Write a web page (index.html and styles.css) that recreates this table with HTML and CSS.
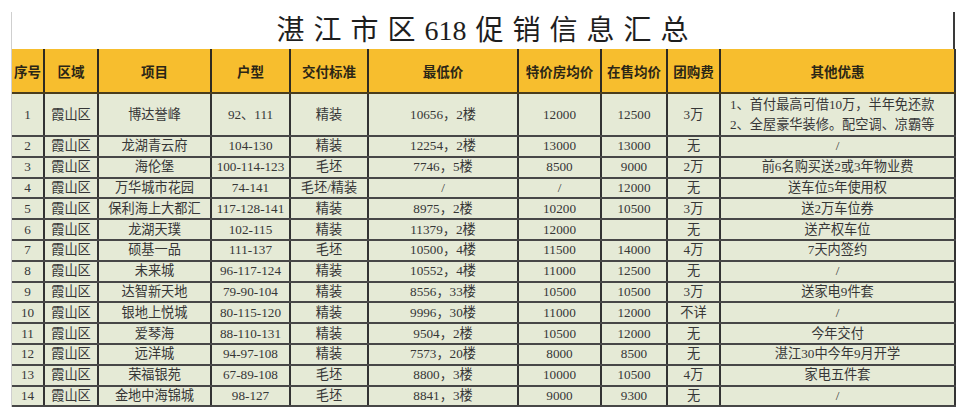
FILE: index.html
```html
<!DOCTYPE html>
<html lang="zh">
<head>
<meta charset="utf-8">
<title>湛江市区618促销信息汇总</title>
<link rel="stylesheet" href="styles.css">
</head>
<body>
<div class="sheet">
  <h1 class="title">湛 江 市 区 618 促 销 信 息 汇 总</h1>
  <table class="grid">
    <colgroup>
      <col class="c-no"><col class="c-area"><col class="c-proj"><col class="c-type"><col class="c-std">
      <col class="c-low"><col class="c-spec"><col class="c-sale"><col class="c-fee"><col class="c-other">
    </colgroup>
    <thead>
      <tr><th>序号</th><th>区域</th><th>项目</th><th>户型</th><th>交付标准</th><th>最低价</th><th>特价房均价</th><th>在售均价</th><th>团购费</th><th>其他优惠</th></tr>
    </thead>
    <tbody>
      <tr class="tall"><td>1</td><td>霞山区</td><td>博达誉峰</td><td>92、111</td><td>精装</td><td>10656，2楼</td><td>12000</td><td>12500</td><td>3万</td><td class="left">1、首付最高可借10万，半年免还款<br>2、全屋豪华装修。配空调、凉霸等</td></tr>
      <tr><td>2</td><td>霞山区</td><td>龙湖青云府</td><td>104-130</td><td>精装</td><td>12254，2楼</td><td>13000</td><td>13000</td><td>无</td><td>/</td></tr>
      <tr><td>3</td><td>霞山区</td><td>海伦堡</td><td>100-114-123</td><td>毛坯</td><td>7746，5楼</td><td>8500</td><td>9000</td><td>2万</td><td>前6名购买送2或3年物业费</td></tr>
      <tr><td>4</td><td>霞山区</td><td>万华城市花园</td><td>74-141</td><td>毛坯/精装</td><td>/</td><td>/</td><td>12000</td><td>无</td><td>送车位5年使用权</td></tr>
      <tr><td>5</td><td>霞山区</td><td>保利海上大都汇</td><td>117-128-141</td><td>精装</td><td>8975，2楼</td><td>10200</td><td>10500</td><td>3万</td><td>送2万车位券</td></tr>
      <tr><td>6</td><td>霞山区</td><td>龙湖天璞</td><td>102-115</td><td>精装</td><td>11379，2楼</td><td>12000</td><td></td><td>无</td><td>送产权车位</td></tr>
      <tr><td>7</td><td>霞山区</td><td>硕基一品</td><td>111-137</td><td>毛坯</td><td>10500，4楼</td><td>11500</td><td>14000</td><td>4万</td><td>7天内签约</td></tr>
      <tr><td>8</td><td>霞山区</td><td>未来城</td><td>96-117-124</td><td>精装</td><td>10552，4楼</td><td>11000</td><td>12500</td><td>无</td><td>/</td></tr>
      <tr><td>9</td><td>霞山区</td><td>达智新天地</td><td>79-90-104</td><td>精装</td><td>8556，33楼</td><td>10500</td><td>10500</td><td>3万</td><td>送家电9件套</td></tr>
      <tr><td>10</td><td>霞山区</td><td>银地上悦城</td><td>80-115-120</td><td>精装</td><td>9996，30楼</td><td>11000</td><td>12000</td><td>不详</td><td>/</td></tr>
      <tr><td>11</td><td>霞山区</td><td>爱琴海</td><td>88-110-131</td><td>精装</td><td>9504，2楼</td><td>10500</td><td>12000</td><td>无</td><td>今年交付</td></tr>
      <tr><td>12</td><td>霞山区</td><td>远洋城</td><td>94-97-108</td><td>精装</td><td>7573，20楼</td><td>8000</td><td>8500</td><td>无</td><td>湛江30中今年9月开学</td></tr>
      <tr><td>13</td><td>霞山区</td><td>荣福银苑</td><td>67-89-108</td><td>毛坯</td><td>8800，3楼</td><td>10000</td><td>10500</td><td>4万</td><td>家电五件套</td></tr>
      <tr><td>14</td><td>霞山区</td><td>金地中海锦城</td><td>98-127</td><td>毛坯</td><td>8841，3楼</td><td>9000</td><td>9300</td><td>无</td><td>/</td></tr>
    </tbody>
  </table>
</div>
</body>
</html>
```

FILE: styles.css
```css
html, body {
  margin: 0;
  padding: 0;
  background: #ffffff;
}

.sheet {
  margin: 12px 0 0 11px;
  width: 944px;
  border-left: 1px solid #cfcfcf;
  box-sizing: border-box;
  font-family: "Liberation Serif", "Noto Sans CJK SC", serif;
  color: #363636;
}

.title {
  margin: 0;
  height: 37px;
  line-height: 37px;
  font-size: 28px;
  font-weight: 400;
  text-align: center;
  word-spacing: 2px;
  color: #1e1e1e;
  border-right: 2px solid #3a3a3a;
}

.grid {
  width: 943px;
  border-collapse: collapse;
  table-layout: fixed;
  font-size: 13.2px;
}

.c-no { width: 32px; }
.c-area { width: 54px; }
.c-proj { width: 113px; }
.c-type { width: 79px; }
.c-std { width: 78px; }
.c-low { width: 150px; }
.c-spec { width: 83px; }
.c-sale { width: 66px; }
.c-fee { width: 53px; }
.c-other { width: 235px; }

.grid th {
  height: 43px;
  padding: 0;
  background: #f7be2e;
  font-size: 13.5px;
  font-weight: 700;
  color: #2b2616;
  border-left: 2px solid #2f2a20;
  border-bottom: 2px solid #4a3d1c;
  white-space: nowrap;
}

.grid th:first-child { border-left: 0; }
.grid th:last-child { border-right: 2px solid #333333; }

.grid td {
  height: 18.8px;
  padding: 0;
  line-height: 18px;
  background: #e5ead6;
  text-align: center;
  white-space: nowrap;
  border-left: 2px solid #333333;
  border-bottom: 2px solid #474747;
}

.grid td:first-child { border-left: 0; }
.grid td:last-child { border-right: 2px solid #333333; }

.grid tr.tall td {
  height: 41px;
}

.grid td.left {
  text-align: left;
  padding-left: 9px;
  line-height: 20px;
}
```
